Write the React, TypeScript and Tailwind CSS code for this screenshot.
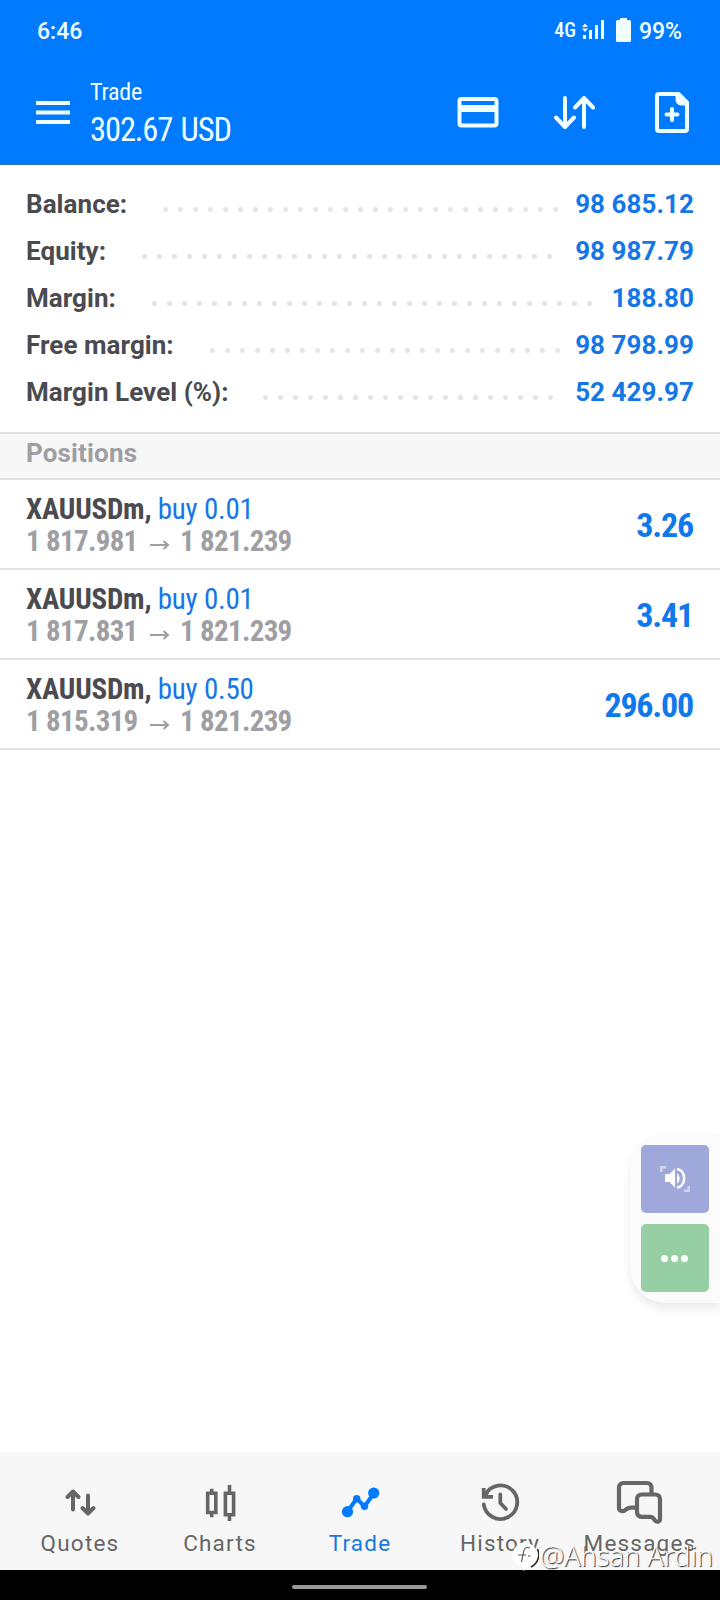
import React from 'react';
import clsx from 'clsx';

interface SummaryRow {
  label: string;
  value: string;
  labelClass: string;
  dotsClass: string;
}

const summary: SummaryRow[] = [
  { label: 'Balance:', value: '98 685.12', labelClass: 'w-[132px]', dotsClass: 'w-[405px]' },
  { label: 'Equity:', value: '98 987.79', labelClass: 'w-[111px]', dotsClass: 'w-[420px]' },
  { label: 'Margin:', value: '188.80', labelClass: 'w-[121px]', dotsClass: 'w-[450px]' },
  { label: 'Free margin:', value: '98 798.99', labelClass: 'w-[179px]', dotsClass: 'w-[360px]' },
  { label: 'Margin Level (%):', value: '52 429.97', labelClass: 'w-[232px]', dotsClass: 'w-[300px]' },
];

const positions = [
  { id: 1, symbol: 'XAUUSDm,', side: 'buy 0.01', open: '1 817.981', current: '1 821.239', profit: '3.26' },
  { id: 2, symbol: 'XAUUSDm,', side: 'buy 0.01', open: '1 817.831', current: '1 821.239', profit: '3.41' },
  { id: 3, symbol: 'XAUUSDm,', side: 'buy 0.50', open: '1 815.319', current: '1 821.239', profit: '296.00' },
];

const StatusBar = () => (
  <div className="flex h-[62px] items-center pl-[37px] pr-[38px] text-[23px] leading-[60px] font-medium">
    <span className="mt-[2px] flex-1">6:46</span>
    <span className="mb-[2px] mr-[6px] font-['Roboto_Condensed'] text-[20px]">4G</span>
    <svg width="24" height="24" viewBox="0 0 24 24" fill="currentColor" className="mr-[10px]">
      <path d="M0 8 3 4.500 6 8zM0 9.500h6L3 13z" />
      <path d="M1 16h3v4H1zM7 11h3v9H7zM13 6h3v14h-3zM19 1h3v19h-3z" />
    </svg>
    <svg width="15" height="24" viewBox="0 0 15 24" fill="currentColor" className="mb-[2px] mr-[8px]">
      <path d="M4 0h7v2h2.500a1.500 1.500 0 0 1 1.500 1.500v19a1.500 1.500 0 0 1-1.500 1.500h-12A1.500 1.500 0 0 1 0 22.500v-19A1.500 1.500 0 0 1 1.500 2H4z" />
    </svg>
    <span className="mt-[2px]">99%</span>
  </div>
);

const Header = () => (
  <header className="h-[165px] border-b border-[#2a72c0] bg-[#007aff] text-[#f0ffff]">
    <StatusBar />
    <div className="flex h-[102px] pl-9 pr-[30px]">
      <svg width="34" height="24" viewBox="0 0 34 24" fill="currentColor" className="mt-[39px]">
        <path d="M0 0h34v4H0zM0 9.500h34v4H0zM0 19h34v4H0z" />
      </svg>
      <div className="ml-5 flex-1 pt-[14px] font-['Roboto_Condensed']">
        <div className="text-[24px] leading-[32px] tracking-[-0.2px]">Trade</div>
        <div className="text-[32.500px] leading-[44px] tracking-[-1.1px] [word-spacing:2px]">302.67 USD</div>
      </div>
      <svg width="42" height="42" viewBox="0 0 42 42" fill="none" stroke="currentColor" strokeWidth="4" className="mt-[30px]">
        <rect x="2.500" y="7" width="37" height="26.500" rx="2" />
        <path d="M2 16.500h38" strokeWidth="7" />
      </svg>
      <svg width="42" height="42" viewBox="0 0 42 42" fill="none" stroke="currentColor" strokeWidth="4" strokeLinecap="round" strokeLinejoin="round" className="ml-[54px] mt-[30px]">
        <path d="M12 6v29M3 25.500l9 9.500 9-9.500M31 35V6M22 15.500 31 6l9 9.500" />
      </svg>
      <svg width="36" height="42" viewBox="0 0 36 42" fill="none" stroke="currentColor" strokeWidth="4" strokeLinejoin="round" className="ml-[59px] mt-[30px]">
        <path d="M5 2h19.500L33 10.500V37a2 2 0 0 1-2 2H5a2 2 0 0 1-2-2V4a2 2 0 0 1 2-2z" />
        <path d="M22 2v5.500c0 3.500 2 5.500 5.500 5.500H34L24.500 2z" fill="currentColor" strokeWidth="1" />
        <path d="M18 17v11M12.500 22.500h11" strokeLinecap="round" />
      </svg>
    </div>
  </header>
);

const AccountSummary = () => (
  <section className="h-[267px] px-[26px] pt-4 text-[26px] font-bold tracking-[0.050px]">
    {summary.map((row) => (
      <div key={row.label} className="flex h-[47px] leading-[47px]">
        <span className={clsx('whitespace-nowrap text-[#4a4a4f]', row.labelClass)}>{row.label}</span>
        <span
          className={clsx(
            'mt-[21px] h-[15px] bg-[radial-gradient(circle,#e5e5e5_2.2px,transparent_2.9px)] bg-[length:15px_15px]',
            row.dotsClass,
          )}
        />
        <span className="ml-auto text-[#1577e6]">{row.value}</span>
      </div>
    ))}
  </section>
);

const Positions = () => (
  <section>
    <h2 className="h-[48px] border-y-2 border-[#e3e3e3] bg-[#f7f7f7] px-[26px] text-[26px] leading-[38px] font-bold tracking-[0.15px] text-[#9e9ea3]">
      Positions
    </h2>
    {positions.map((p) => (
      <div key={p.id} className="flex h-[90px] border-b-2 border-[#e3e3e3] px-[26px] pt-[13px] font-['Roboto_Condensed']">
        <div className="flex-1 text-[29px] leading-[32px]">
          <div className="tracking-[-0.22px]">
            <span className="font-bold text-[#4a4a4f]">{p.symbol}</span>{' '}
            <span className="text-[#1577e6]">{p.side}</span>
          </div>
          <div className="flex font-bold tracking-[-0.68px] text-[#9e9ea3]">
            <span className="w-[124px]">{p.open}</span>
            <svg width="20" height="12" viewBox="0 0 20 12" fill="none" stroke="currentColor" strokeWidth="2" className="mr-[10px] mt-[14px]">
              <path d="M0 6h18M13.500 2 18 6l-4.500 4" />
            </svg>
            <span>{p.current}</span>
          </div>
        </div>
        <div className="pr-px text-[34px] leading-[64px] font-bold tracking-[-1.2px] text-[#0f78ea]">{p.profit}</div>
      </div>
    ))}
  </section>
);

const FloatingPanel = () => (
  <div className="absolute right-0 top-[1133px] flex h-[170px] w-[90px] flex-col gap-[11px] rounded-l-[36px] bg-[#fbfbfb] pl-[11px] pt-3 text-white shadow-[0_6px_10px_rgba(0,0,0,0.08)]">
    <button className="flex size-[68px] items-center justify-center rounded-[5px] bg-[#9fa8da]">
      <svg width="30" height="26" viewBox="0 0 30 26" fill="none">
        <path d="M0 6V0h6v2.500H2.500V6zM30 20v6h-6v-2.500h3.500V20z" fill="#cfd3ed" />
        <path d="M5 8h4.500L15 2.500v19L9.500 16H5zM17 7.500c3.500 1.500 3.500 8.500 0 10z" fill="currentColor" />
        <path d="M17 3c9.500 1.500 9.500 17 0 18.500" stroke="currentColor" strokeWidth="2.500" />
      </svg>
    </button>
    <button className="flex size-[68px] items-center justify-center gap-[3px] rounded-[5px] bg-[#96cfa4] pr-px">
      <span className="size-[7px] rounded-full bg-white" />
      <span className="size-[7px] rounded-full bg-white" />
      <span className="size-[7px] rounded-full bg-white" />
    </button>
  </div>
);

const tabs = [
  {
    label: 'Quotes',
    icon: <path d="M17 31.500V14M11.500 19l5.500-5.500 5.500 5.500M32 17.500V35M26.500 30l5.500 5.500 5.500-5.500" strokeLinecap="round" strokeLinejoin="round" />,
  },
  {
    label: 'Charts',
    icon: (
      <path
        d="M11.700 15.200h8.100v19.300h-8.100zM15.700 10.700v4M15.700 35v4.300M29.400 15.200h8.200v21.500h-8.200zM33.500 7v8M33.500 37v6"
        strokeWidth="3.600"
      />
    ),
  },
  {
    label: 'Trade',
    active: true,
    icon: (
      <>
        <path d="M11.500 33.500 20.700 20.500 28.500 28.500 37.700 15.500" />
        <g fill="currentColor" stroke="none">
          <circle cx="11.500" cy="33.700" r="5.600" />
          <circle cx="20.700" cy="20.800" r="3.700" />
          <circle cx="28.500" cy="28.300" r="3.700" />
          <circle cx="37.700" cy="15" r="5.600" />
        </g>
      </>
    ),
  },
  {
    label: 'History',
    icon: (
      <g strokeWidth="3.800">
        <path d="M7.800 26.500A16.800 16.800 0 1 0 9.500 16.500" strokeLinecap="round" />
        <path d="M7.700 10v8.800h9.300M7.700 18.500l4-4.500" />
        <path d="M24.300 16.500V25l5.700 6" strokeLinecap="round" strokeLinejoin="round" />
      </g>
    ),
  },
  {
    label: 'Messages',
    icon: (
      <g strokeWidth="4.200" strokeLinejoin="round">
        <path d="M20.500 29.700H15c-5.500 0-5.500 3.500-8.500 3.500C4 33.200 3 32 3 30V9.500A4.500 4.500 0 0 1 7.500 5H31a4.500 4.500 0 0 1 4.500 4.500V16" />
        <path d="M25.500 16.500h14a4.500 4.500 0 0 1 4.500 4.500V41c0 3-3.500 3.500-5 1.500-2-3-2.500-3.700-5-3.700h-8.500a4.500 4.500 0 0 1-4.500-4.500V21a4.500 4.500 0 0 1 4.500-4.500z" />
      </g>
    ),
  },
];

const BottomNav = () => (
  <nav className="flex h-[118px] bg-[#f7f7f7] px-[10px] pt-[26px]">
    {tabs.map((tab) => (
      <div key={tab.label} className={clsx('flex w-[140px] flex-col items-center', tab.active ? 'text-[#007aff]' : 'text-[#666]')}>
        <svg width="48" height="48" viewBox="0 0 48 48" fill="none" stroke="currentColor" strokeWidth="4">
          {tab.icon}
        </svg>
        <span className={clsx('mt-[2px] text-[22.500px] leading-[30px] tracking-[1.2px]', tab.active && 'text-[#1b78dd]')}>{tab.label}</span>
      </div>
    ))}
  </nav>
);

const Watermark = () => (
  <div className="absolute right-[7px] top-[1538px] flex h-[36px] items-center gap-px text-white">
    <svg width="27" height="32" viewBox="0 0 27 32">
      <path d="M19 27A13.500 13.500 0 0 0 25.500 9" fill="none" stroke="#222" strokeWidth="1.500" />
      <path d="M12.500 2.500a12 12 0 0 1 4.500 23.300L11.500 31l-1.500-4.800A12 12 0 0 1 12.500 2.500z" fill="#fff" />
      <path d="M18 8c-4-1.500-6 .5-6.500 4L9.500 22M6 15h8M16 16h2.500" fill="none" stroke="#555" strokeWidth="1.200" />
    </svg>
    <span className="font-['Open_Sans'] text-[27.400px] leading-[36px] font-light whitespace-nowrap [text-shadow:1px_1px_1px_#222]">@Ahsan Ardin</span>
  </div>
);

const App: React.FC = () => {
  return (
    <div className="relative flex h-[1600px] w-[720px] flex-col overflow-hidden bg-white font-['Roboto',sans-serif]">
      <Header />
      <AccountSummary />
      <Positions />
      <div className="flex-1" />
      <BottomNav />
      <div className="flex h-[30px] items-center justify-center bg-black pr-[2px] pt-1">
        <div className="h-1 w-[135px] rounded-full bg-[#999]" />
      </div>
      <FloatingPanel />
      <Watermark />
    </div>
  );
};

export default App;
